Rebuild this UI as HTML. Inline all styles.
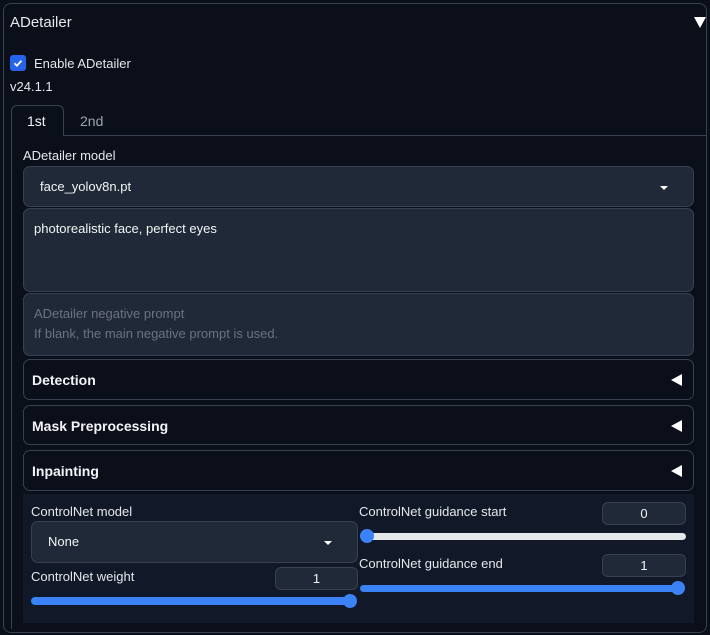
<!DOCTYPE html>
<html><head><meta charset="utf-8"><style>
*{box-sizing:border-box;margin:0;padding:0}
body{width:710px;height:635px;background:#0b0f19;font-family:"Liberation Sans",sans-serif;color:#e5e7eb;position:relative;overflow:hidden}
.a{position:absolute}
.t{position:absolute;white-space:nowrap;line-height:1}
.box{position:absolute;background:#1f2937;border:1px solid #374151;border-radius:7px}
.acc{position:absolute;background:#0b0f19;border:1px solid #374151;border-radius:7px;left:23px;width:671px}
.acc .t{left:8px;font-size:14px;font-weight:bold;color:#f3f4f6}
.tri{position:absolute;right:11px;width:0;height:0;border-top:6px solid transparent;border-bottom:6px solid transparent;border-right:11px solid #fff}
.num{position:absolute;background:#1f2937;border:1px solid #374151;border-radius:6px;font-size:13px;text-align:center;line-height:21px;color:#f3f4f6}
.lab{font-size:13px;color:#e5e7eb}
</style></head><body>
<div class="a" style="left:3px;top:3px;width:704px;height:630px;border:1px solid #374151;border-radius:8px"></div>
<div class="t" style="left:10px;top:15px;font-size:15px">ADetailer</div>
<div class="a" style="left:694px;top:17px;width:0;height:0;border-left:6px solid transparent;border-right:6px solid transparent;border-top:11px solid #fff"></div>
<div class="a" style="left:10px;top:55px;width:16px;height:16px;background:#2563eb;border-radius:3px"></div>
<svg class="a" style="left:10px;top:55px" width="16" height="16"><path d="M4.5 8.3l2.4 2.4 4.6-5" stroke="#fff" stroke-width="1.8" fill="none"/></svg>
<div class="t lab" style="left:34px;top:57px">Enable ADetailer</div>
<div class="t lab" style="left:10px;top:80px">v24.1.1</div>
<div class="a" style="left:11px;top:135px;width:696px;height:494px;border:1px solid #374151;border-right:none;border-bottom:none"></div>
<div class="a" style="left:11px;top:105px;width:53px;height:31px;border:1px solid #374151;border-bottom:none;border-radius:6px 6px 0 0;background:#0b0f19"></div>
<div class="t" style="left:27px;top:114px;font-size:14px;color:#f3f4f6">1st</div>
<div class="t" style="left:80px;top:114px;font-size:14px;color:#9ca3af">2nd</div>
<div class="t lab" style="left:23px;top:149px">ADetailer model</div>
<div class="box" style="left:23px;top:166px;width:671px;height:41px"></div>
<div class="t lab" style="left:40px;top:180px;color:#f3f4f6">face_yolov8n.pt</div>
<div class="a" style="left:660px;top:186px;border-left:4px solid transparent;border-right:4px solid transparent;border-top:4px solid #fff"></div>
<div class="box" style="left:23px;top:208px;width:671px;height:84px"></div>
<div class="t lab" style="left:34px;top:222px;color:#f3f4f6">photorealistic face, perfect eyes</div>
<div class="box" style="left:23px;top:293px;width:671px;height:63px"></div>
<div class="t lab" style="left:34px;top:307px;color:#6b7280">ADetailer negative prompt</div>
<div class="t lab" style="left:34px;top:327px;color:#6b7280">If blank, the main negative prompt is used.</div>
<div class="acc" style="top:359px;height:41px"><div class="t" style="top:13px">Detection</div><div class="tri" style="top:14px"></div></div>
<div class="acc" style="top:405px;height:40px"><div class="t" style="top:13px">Mask Preprocessing</div><div class="tri" style="top:14px"></div></div>
<div class="acc" style="top:450px;height:41px"><div class="t" style="top:13px">Inpainting</div><div class="tri" style="top:14px"></div></div>
<div class="a" style="left:23px;top:494px;width:671px;height:129px;background:#111827"></div>
<div class="t lab" style="left:31px;top:505px">ControlNet model</div>
<div class="box" style="left:31px;top:521px;width:327px;height:42px"></div>
<div class="t lab" style="left:48px;top:535px;color:#f3f4f6">None</div>
<div class="a" style="left:324px;top:541px;border-left:4px solid transparent;border-right:4px solid transparent;border-top:4px solid #fff"></div>
<div class="t lab" style="left:31px;top:570px">ControlNet weight</div>
<div class="num" style="left:275px;top:567px;width:83px;height:23px">1</div>
<div class="a" style="left:31px;top:597px;width:320px;height:8px;background:#3b82f6;border-radius:4px"></div>
<div class="a" style="left:343px;top:594px;width:14px;height:14px;background:#3b82f6;border-radius:50%"></div>
<div class="t lab" style="left:359px;top:505px">ControlNet guidance start</div>
<div class="num" style="left:602px;top:502px;width:84px;height:23px">0</div>
<div class="a" style="left:361px;top:533px;width:325px;height:7px;background:#e5e7eb;border-radius:4px"></div>
<div class="a" style="left:360px;top:529px;width:14px;height:14px;background:#3b82f6;border-radius:50%"></div>
<div class="t lab" style="left:359px;top:557px">ControlNet guidance end</div>
<div class="num" style="left:602px;top:554px;width:84px;height:23px">1</div>
<div class="a" style="left:360px;top:585px;width:320px;height:7px;background:#3b82f6;border-radius:4px"></div>
<div class="a" style="left:671px;top:581px;width:14px;height:14px;background:#3b82f6;border-radius:50%"></div>
</body></html>
